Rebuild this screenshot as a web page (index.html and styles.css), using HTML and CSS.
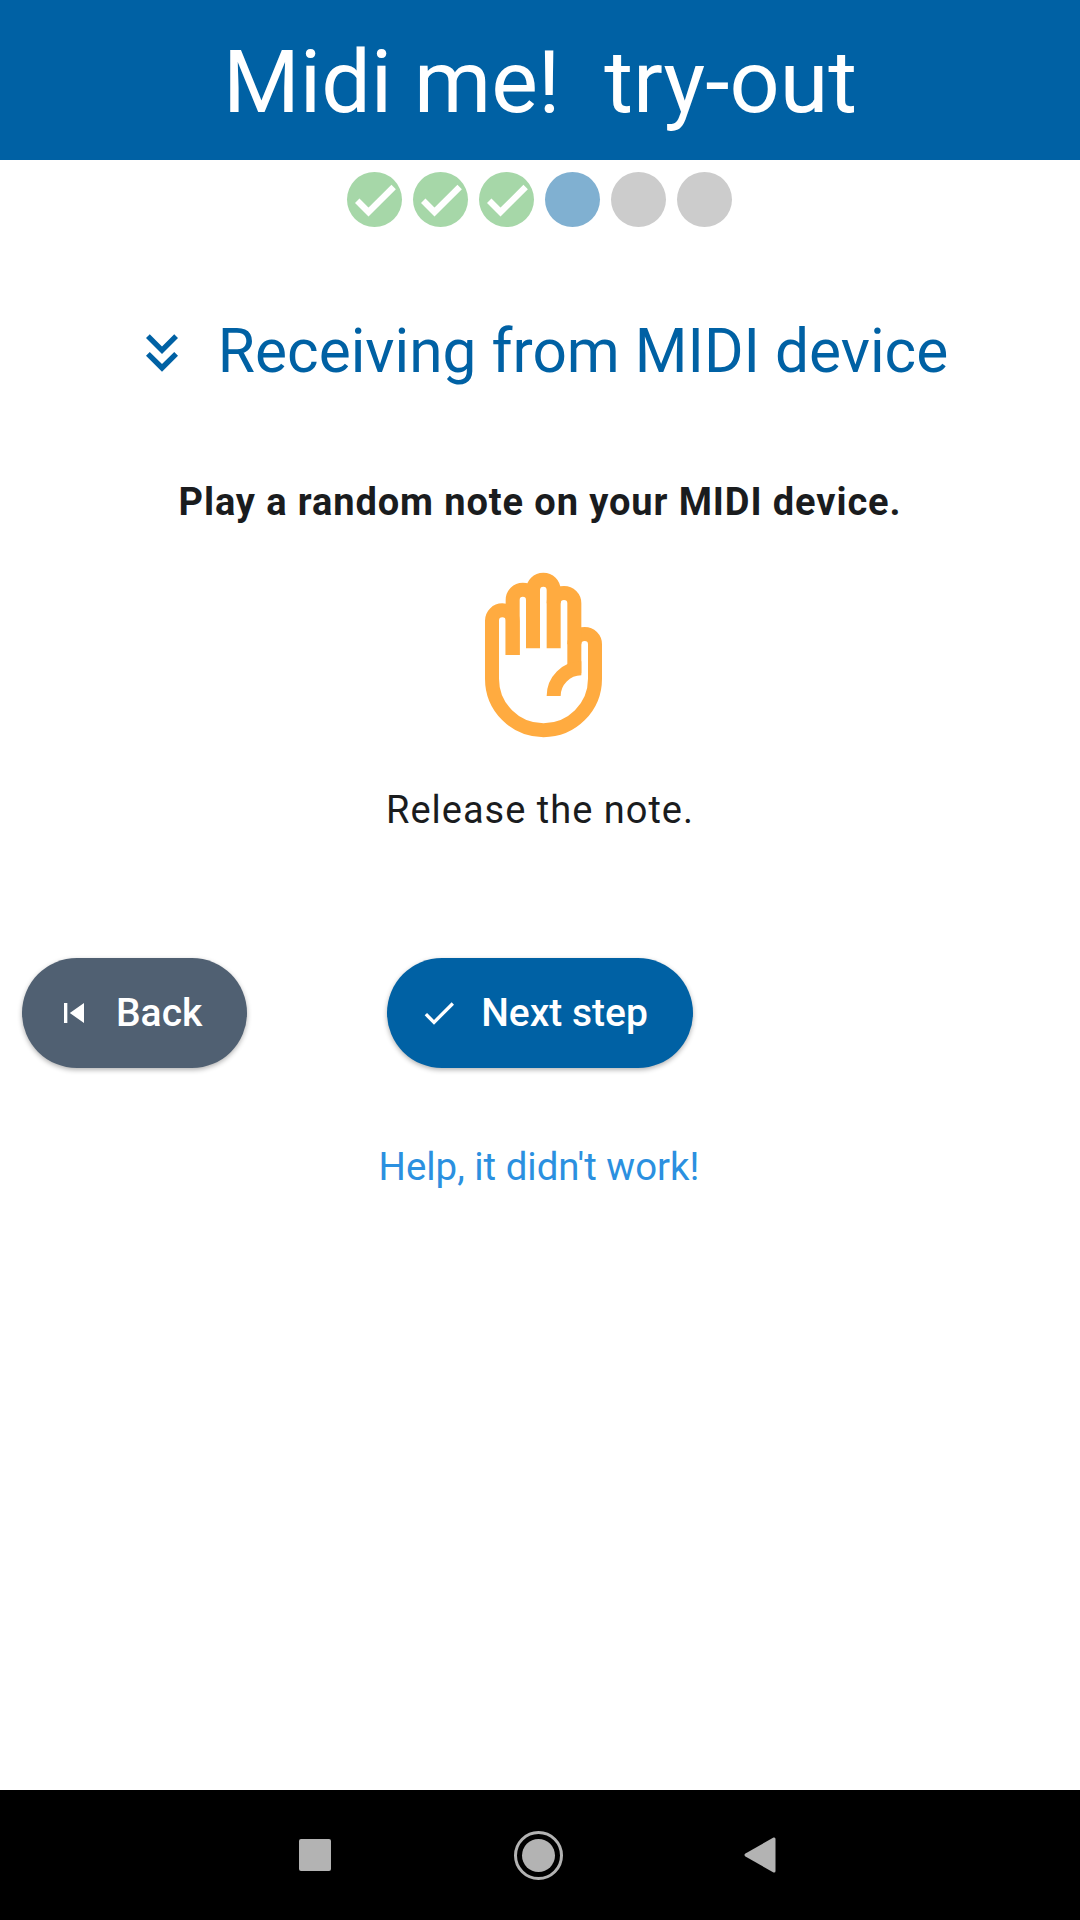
FILE: index.html
```html
<!DOCTYPE html>
<html lang="en">
<head>
  <meta charset="UTF-8">
  <title>Midi me! try-out</title>
  <link rel="stylesheet" href="styles.css">
</head>
<body>
  <header class="topbar">Midi me!&nbsp; try-out</header>

  <main class="contenido">
    <div class="pasos">
      <span class="paso hecho"><svg viewBox="0 0 24 24"><path d="M9 16.17L4.83 12l-1.42 1.41L9 19 21 7l-1.41-1.41z"/></svg></span>
      <span class="paso hecho"><svg viewBox="0 0 24 24"><path d="M9 16.17L4.83 12l-1.42 1.41L9 19 21 7l-1.41-1.41z"/></svg></span>
      <span class="paso hecho"><svg viewBox="0 0 24 24"><path d="M9 16.17L4.83 12l-1.42 1.41L9 19 21 7l-1.41-1.41z"/></svg></span>
      <span class="paso actual"></span>
      <span class="paso"></span>
      <span class="paso"></span>
    </div>

    <h1 class="titulo">
      <svg class="titulo-icono" viewBox="0 0 24 24"><path d="M18 6.41L16.59 5 12 9.58 7.41 5 6 6.41l6 6z"/><path d="M18 13l-1.41-1.41L12 16.17l-4.59-4.58L6 13l6 6z"/></svg>
      <span>Receiving from MIDI device</span>
    </h1>

    <p class="instruccion">Play a random note on your MIDI device.</p>

    <svg class="mano" viewBox="0 0 480 570">
      <path d="M158 285V182A31 31 0 0 0 96 182V356A154.5 154.5 0 0 0 405 356V253A31 31 0 0 0 343 253"/>
      <path d="M158 285V120A30.5 30.5 0 0 1 219 120"/>
      <path d="M219 265V90A31 31 0 0 1 281 90V265"/>
      <path d="M281 130A31 31 0 0 1 343 130V340"/>
      <path d="M281 408A83 83 0 0 1 364 325"/>
    </svg>

    <p class="estado">Release the note.</p>

    <div class="acciones">
      <button class="boton atras">
        <svg viewBox="0 0 24 24"><path d="M6 6h2v12H6zm3.5 6l8.5 6V6z"/></svg>
        Back
      </button>
      <button class="boton siguiente">
        <svg viewBox="0 0 24 24"><path d="M9 16.17L4.83 12l-1.42 1.41L9 19 21 7l-1.41-1.41z"/></svg>
        Next step
      </button>
    </div>

    <a class="ayuda" href="#">Help, it didn't work!</a>
  </main>

  <nav class="navbar">
    <svg class="nav-cuadro" viewBox="0 0 32 32"><rect width="32" height="32" rx="2"/></svg>
    <svg class="nav-circulo" viewBox="0 0 49 49"><circle cx="24.5" cy="24.5" r="16.5"/><circle class="aro" cx="24.5" cy="24.5" r="23"/></svg>
    <svg class="nav-triangulo" viewBox="0 0 32 36"><path d="M29.5 0.5Q31.5 0 31.5 2V34Q31.5 36 29.5 35.5L1 19.2Q0 18 1 16.8z"/></svg>
  </nav>
</body>
</html>
```

FILE: styles.css
```css
* {
  box-sizing: border-box;
}

body {
  font-family: 'Roboto', sans-serif;
  margin: 0;
  padding: 0;
  width: 1080px;
  height: 1920px;
  background-color: #fff;
  color: #1a1c1e;
  display: flex;
  flex-direction: column;
}

.topbar {
  height: 160px;
  padding-top: 4px;
  background-color: #0061a4;
  color: #fff;
  font-size: 88px;
  line-height: 156px;
  text-align: center;
  flex-shrink: 0;
}

.contenido {
  flex: 1;
  display: flex;
  flex-direction: column;
  align-items: center;
}

.pasos {
  display: flex;
  gap: 11px;
  margin-top: 12px;
  padding-right: 1px;
}

.paso {
  width: 55px;
  height: 55px;
  border-radius: 50%;
  background-color: #ccc;
  display: flex;
  align-items: center;
  justify-content: center;
}

.paso.hecho {
  background-color: #a6d7a8;
}

.paso.actual {
  background-color: #80b0d1;
}

.paso svg {
  width: 52px;
  height: 52px;
  fill: #fff;
  stroke: #fff;
  stroke-width: 0.9;
}

.titulo {
  display: flex;
  align-items: center;
  gap: 24px;
  margin: 90px 0 0;
  padding-right: 2px;
  font-size: 60.4px;
  font-weight: 400;
  line-height: 70px;
  color: #0061a4;
}

.titulo-icono {
  width: 64px;
  height: 64px;
  margin-top: 2px;
  fill: #0061a4;
}

.instruccion {
  margin: 90px 0 0;
  font-size: 38px;
  font-weight: 700;
  line-height: 50px;
  letter-spacing: 0.9px;
}

.mano {
  width: 160px;
  height: 190px;
  margin-top: 33px;
  fill: none;
  stroke: #ffab40;
  stroke-width: 42;
  stroke-linejoin: round;
}

.estado {
  margin: 35px 0 0;
  font-size: 38px;
  line-height: 50px;
  letter-spacing: 1px;
}

.acciones {
  align-self: stretch;
  display: grid;
  grid-template-columns: 1fr auto 1fr;
  align-items: center;
  margin-top: 123px;
  padding: 0 22px;
}

.boton {
  height: 110px;
  padding: 0 45px 0 32px;
  display: flex;
  align-items: center;
  gap: 22px;
  border: none;
  border-radius: 55px;
  color: #fff;
  font-family: inherit;
  font-size: 39px;
  font-weight: 500;
  box-shadow: 0 2px 5px rgba(0, 0, 0, 0.3);
}

.boton svg {
  width: 40px;
  height: 40px;
  fill: #fff;
}

.atras {
  background-color: #506072;
  justify-self: start;
}

.siguiente {
  background-color: #0061a4;
}

.ayuda {
  margin-top: 74px;
  padding-right: 2px;
  font-size: 38.4px;
  line-height: 50px;
  color: #2b90e0;
  text-decoration: none;
}

.navbar {
  height: 130px;
  background-color: #000;
  display: flex;
  align-items: center;
  justify-content: center;
  gap: 181px;
  padding-right: 5px;
  flex-shrink: 0;
}

.navbar svg {
  fill: #b3b3b3;
}

.nav-cuadro {
  width: 32px;
  height: 32px;
}

.nav-circulo {
  width: 49px;
  height: 49px;
  margin-left: 2px;
}

.nav-circulo .aro {
  fill: none;
  stroke: #b3b3b3;
  stroke-width: 3;
}

.nav-triangulo {
  width: 32px;
  height: 36px;
}
```
